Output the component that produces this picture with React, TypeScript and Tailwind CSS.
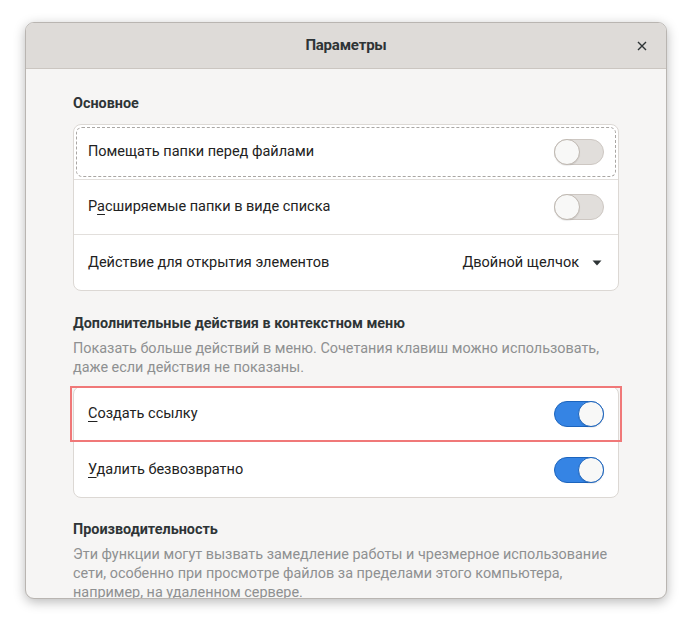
import { ReactNode } from 'react';

function Toggle({ on }: { on: boolean }) {
  return (
    <div
      className={`relative w-[50px] h-[26px] rounded-full border ${
        on ? 'bg-[#3584e4] border-[#1c64bd]' : 'bg-[#e1dedb] border-[#cdc7c2]'
      }`}
    >
      <div
        className={`absolute top-[-1px] w-[26px] h-[26px] rounded-full bg-[#f8f8f7] border ${
          on ? 'right-[-1px] border-[#1c64bd]' : 'left-[-1px] border-[#bfb8b1]'
        } shadow-[0_1px_1px_rgba(0,0,0,0.08)]`}
      />
    </div>
  );
}

function Row({ children, right, last, focus, marked }: { children: ReactNode; right: ReactNode; last?: boolean; focus?: boolean; marked?: boolean }) {
  return (
    <div className={`relative flex items-center justify-between h-[55px] pl-[14px] pr-[14px] ${last ? '' : 'border-b border-[#e2dfdc]'}`}>
      {focus && <div className="absolute inset-[2px] rounded-[6px] border border-dashed border-[#a9a6a3]" />}
      {marked && <div className="absolute left-[-4px] right-[-4px] top-[-1px] bottom-[-1px] border-2 border-[#f07878] pointer-events-none" />}
      <span className="text-[14.5px] text-[#222]">{children}</span>
      {right}
    </div>
  );
}

export default function App() {
  return (
    <div className="w-[692px] h-[628px] bg-white pt-[22px] pl-[25px]" style={{ fontFamily: 'Roboto, "Noto Sans", sans-serif' }}>
      <div className="w-[642px] h-[577px] flex flex-col overflow-hidden rounded-[9px] border border-[#b9b5b1] bg-[#f6f5f4] shadow-[0_3px_12px_rgba(0,0,0,0.28)]">
        {/* header */}
        <div className="relative h-[46px] shrink-0 flex items-center justify-center bg-[#dedbd8] border-b border-[#cbc6c1]">
          <span className="text-[15px] font-bold text-[#2e3436] tracking-[-0.2px]">Параметры</span>
          <svg className="absolute right-[19px] top-[18px]" width="10" height="10" viewBox="0 0 10 10">
            <path d="M1 1 L9 9 M9 1 L1 9" stroke="#2e3436" strokeWidth="1.4" />
          </svg>
        </div>

        <div className="px-[47px] pt-[25px]">
          <div className="text-[14.4px] leading-[20px] font-bold text-[#2e3436] mb-[10px]">Основное</div>
          <div className="rounded-[8px] border border-[#dcd8d4] bg-white">
            <Row focus right={<Toggle on={false} />}>Помещать папки перед файлами</Row>
            <Row right={<Toggle on={false} />}>
              Р<span className="underline underline-offset-[3px]">а</span>сширяемые папки в виде списка
            </Row>
            <Row
              last
              right={
                <div className="flex items-center gap-[13px] pr-[2px]">
                  <span className="text-[14.5px] text-[#222]">Двойной щелчок</span>
                  <svg width="10" height="6" viewBox="0 0 10 6">
                    <path d="M0.5 0.5 H9.5 L5 5.5 Z" fill="#2e3436" />
                  </svg>
                </div>
              }
            >
              Действие для открытия элементов
            </Row>
          </div>

          <div className="mt-[23px] text-[14.4px] leading-[20px] font-bold text-[#2e3436]">
            Дополнительные действия в контекстном меню
          </div>
          <div className="mt-[5px] text-[14.4px] leading-[19px] text-[#8e9091]">
            Показать больше действий в меню. Сочетания клавиш можно использовать, даже если действия не показаны.
          </div>
          <div className="mt-[9px] rounded-[8px] border border-[#dcd8d4] bg-white">
            <Row marked right={<Toggle on />}>
              <span className="underline underline-offset-[3px]">С</span>оздать ссылку
            </Row>
            <Row last right={<Toggle on />}>
              <span className="underline underline-offset-[3px]">У</span>далить безвозвратно
            </Row>
          </div>

          <div className="mt-[22px] text-[14.4px] leading-[20px] font-bold text-[#2e3436]">Производительность</div>
          <div className="mt-[5px] text-[14.4px] leading-[19px] text-[#8e9091]">
            Эти функции могут вызвать замедление работы и чрезмерное использование сети, особенно при просмотре файлов за пределами этого компьютера, например, на удаленном сервере.
          </div>
        </div>
      </div>
    </div>
  );
}
